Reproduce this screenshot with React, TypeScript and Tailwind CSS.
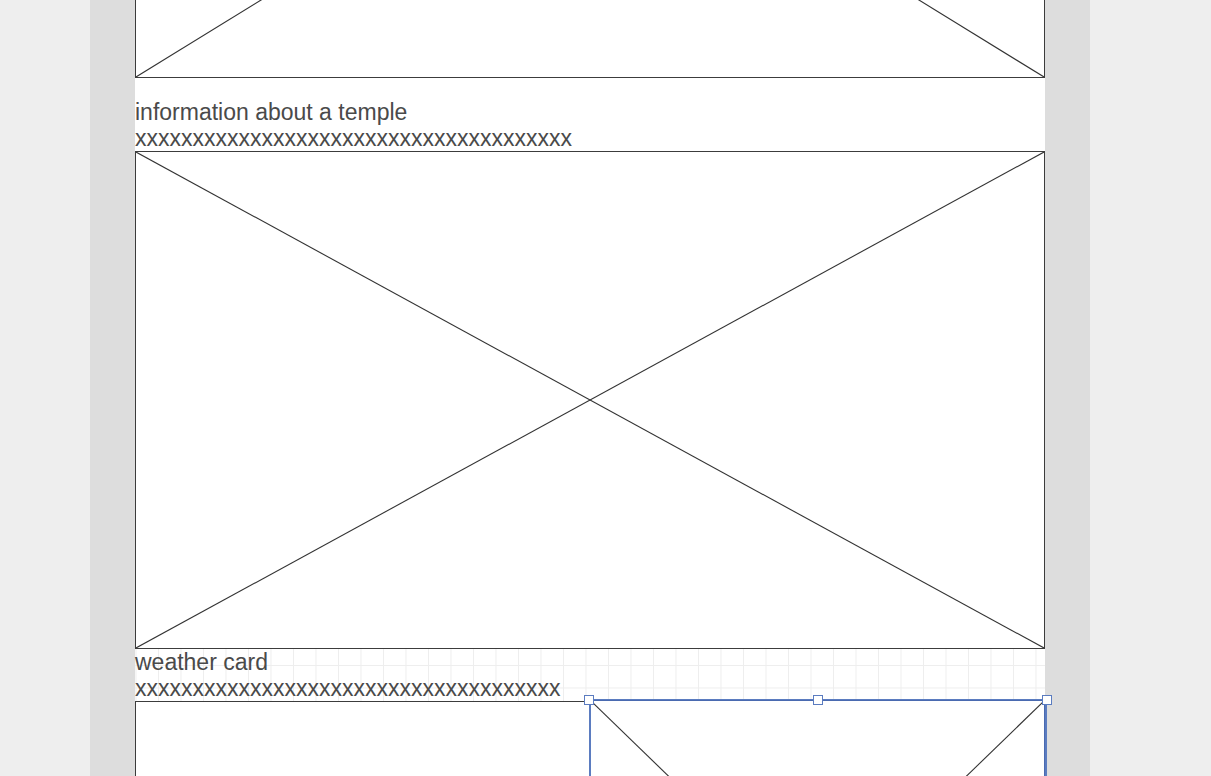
import React from 'react';

function Cross() {
  return (
    <svg className="absolute inset-0 h-full w-full" viewBox="0 0 100 100" preserveAspectRatio="none">
      <line x1="0" y1="0" x2="100" y2="100" stroke="#333" strokeWidth="1.1" vectorEffect="non-scaling-stroke" />
      <line x1="100" y1="0" x2="0" y2="100" stroke="#333" strokeWidth="1.1" vectorEffect="non-scaling-stroke" />
    </svg>
  );
}

function ImageBox({ className }: { className: string }) {
  return (
    <div className={`relative border border-[#3c3c3c] bg-white ${className}`}>
      <Cross />
    </div>
  );
}

function Label({ title, filler, className }: { title: string; filler: string; className: string }) {
  return (
    <div className={`text-[23px] leading-[26px] text-[#4a4a4a] ${className}`}>
      <div>{title}</div>
      <div>{filler}</div>
    </div>
  );
}

function Handle() {
  return <div className="h-[10px] w-[10px] border border-[#5b7cc0] bg-white" />;
}

export default function App() {
  return (
    <div className="flex h-[776px] overflow-hidden bg-[#eeeeee] font-['Liberation_Sans',Arial,sans-serif]">
      <div className="ml-[90px] w-[1000px] bg-[#dddddd] px-[45px]">
        <div className="w-[910px] bg-white">
          <ImageBox className="-mt-[483px] h-[561px]" />

          <Label
            title="information about a temple"
            filler={'x'.repeat(38)}
            className="pt-[21px]"
          />

          <ImageBox className="h-[498px]" />

          <Label
            title="weather card"
            filler={'x'.repeat(37)}
            className="h-[52px] bg-[linear-gradient(to_right,#eeeeee_1px,transparent_1px),linear-gradient(to_bottom,#eeeeee_1px,transparent_1px)] bg-[size:22.5px_22.5px] bg-[position:0.5px_16px]"
          />

          <div className="flex">
            <div className="h-[440px] w-[455px] border border-[#3c3c3c] bg-white" />
            <div className="relative -mt-px h-[441px] flex-1">
              <ImageBox className="h-full w-full border-[#4a6ab0]" />
              <div className="pointer-events-none absolute -left-px -right-[2px] -top-px h-full border-x-2 border-t border-[#5b7cc0]" />
              <div className="absolute -left-[6px] -right-[7px] -top-[5px] flex justify-between">
                <Handle />
                <Handle />
                <Handle />
              </div>
            </div>
          </div>
        </div>
      </div>
    </div>
  );
}
